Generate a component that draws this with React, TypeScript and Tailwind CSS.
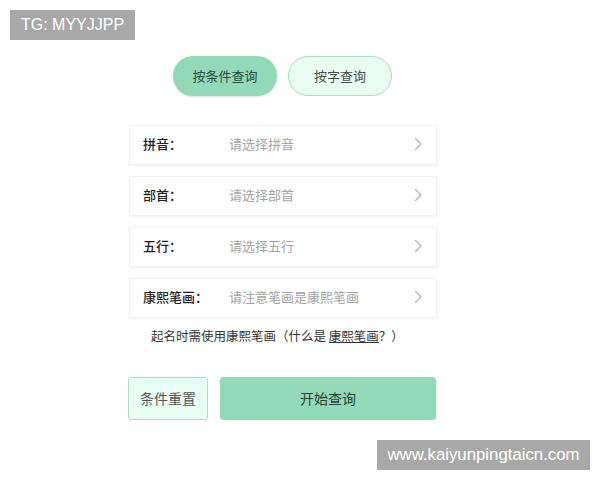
import React from "react";

const rows = [
  { label: "拼音：", placeholder: "请选择拼音" },
  { label: "部首：", placeholder: "请选择部首" },
  { label: "五行：", placeholder: "请选择五行" },
  { label: "康熙笔画：", placeholder: "请注意笔画是康熙笔画" },
];

function Chevron() {
  return (
    <svg width="9" height="14" viewBox="0 0 9 14" fill="none">
      <path d="M1.5 1.5L7 7L1.5 12.5" stroke="#b5b5b5" strokeWidth="1.3" strokeLinecap="round" strokeLinejoin="round" />
    </svg>
  );
}

export default function App() {
  return (
    <div
      className="relative w-[600px] h-[480px] bg-white overflow-hidden"
      style={{ fontFamily: '"Noto Sans CJK SC", "Noto Sans", sans-serif' }}
    >
      {/* Watermark top */}
      <div className="absolute left-[10px] top-[10px] w-[125px] h-[30px] bg-[#a8a8a8] text-white text-[16px] flex items-center justify-center" style={{ fontFamily: '"Liberation Sans", sans-serif' }}>
        TG: MYYJJPP
      </div>

      <div className="flex flex-col items-start pt-[56px] pl-[128px]">
        {/* Toggle */}
        <div className="flex gap-[11px] ml-[45px]">
          <button className="w-[104px] h-[40px] rounded-full bg-[#92d9b8] text-[13px] text-[#2f4a3d] shadow-[0_1px_2px_rgba(0,0,0,0.12)]">
            按条件查询
          </button>
          <button className="w-[104px] h-[40px] rounded-full bg-[#e8fcf2] border border-[#a9dcc5] text-[13px] text-[#4a4a4a]">
            按字查询
          </button>
        </div>

        {/* Rows */}
        <div className="flex flex-col gap-[11px] mt-[29px] w-[308px] ml-[1px]">
          {rows.map((r) => (
            <div
              key={r.label}
              className="flex items-center h-[40px] pl-[13px] pr-[13px] pb-[2px] bg-white border border-[#f2f2f2] shadow-[0_1px_3px_rgba(0,0,0,0.05)]"
            >
              <span className="w-[86px] text-[13px] font-medium text-[#222]">{r.label}</span>
              <span className="flex-1 text-[13px] text-[#a3a3a3]">{r.placeholder}</span>
              <Chevron />
            </div>
          ))}
        </div>

        <p className="mt-[9px] ml-[23px] text-[12.5px] text-[#333]">
          起名时需使用康熙笔画（什么是 <span className="underline">康熙笔画</span>？）
        </p>

        {/* Actions */}
        <div className="flex gap-[12px] mt-[31px]">
          <button className="w-[80px] h-[43px] rounded-[3px] bg-[#e8fdf4] border border-[#abdcc6] text-[14px] text-[#555]">
            条件重置
          </button>
          <button className="w-[216px] h-[43px] rounded-[3px] bg-[#92d9b8] text-[14px] text-[#2c3f35]">
            开始查询
          </button>
        </div>
      </div>

      {/* Watermark bottom */}
      <div className="absolute left-[377px] top-[440px] w-[213px] h-[30px] bg-[#a8a8a8] text-white text-[16.8px] flex items-center justify-center" style={{ fontFamily: '"Liberation Sans", sans-serif' }}>
        www.kaiyunpingtaicn.com
      </div>
    </div>
  );
}
